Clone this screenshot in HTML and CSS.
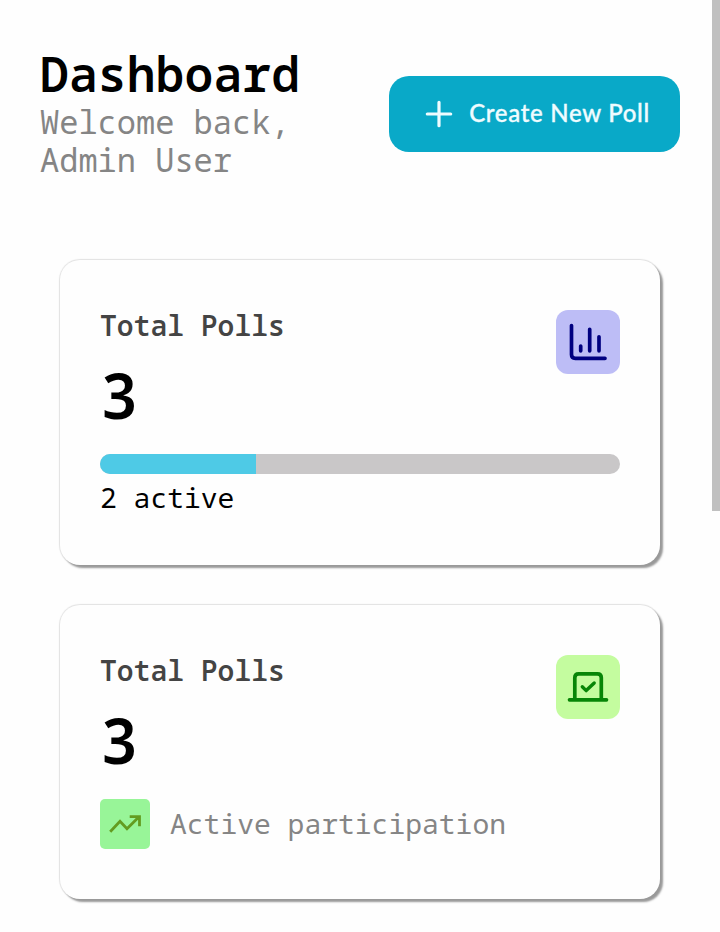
FILE: index.html
```html
<!DOCTYPE html>
<html lang="en">
<head>
<meta charset="utf-8">
<title>Dashboard</title>
<link rel="stylesheet" href="styles.css">
</head>
<body>
<header class="header">
  <div class="heading">
    <h1 class="title">Dashboard</h1>
    <p class="welcome">Welcome back,<br>Admin User</p>
  </div>
  <button class="create">
    <svg class="plus" viewBox="0 0 28 28"><path d="M14 2.3v23.4M2.3 14h23.4"/></svg>
    <span>Create New Poll</span>
  </button>
</header>
<main class="cards">
  <section class="card">
    <div class="top">
      <div>
        <h2 class="label">Total Polls</h2>
        <p class="value">3</p>
      </div>
      <svg class="icon blue" viewBox="0 0 64 64"><path d="M15.5 15.5V44.5Q15.5 48.3 19.3 48.3H49M24.7 36v4.8M33.7 19.3v21.5M43 26.8v14"/></svg>
    </div>
    <div class="track"><div class="fill"></div></div>
    <p class="active">2 active</p>
  </section>
  <section class="card">
    <div class="top">
      <div>
        <h2 class="label">Total Polls</h2>
        <p class="value">3</p>
      </div>
      <svg class="icon green" viewBox="0 0 64 64"><path d="M13.5 44.8h37M18.8 44.8V22.7Q18.8 18.9 22.6 18.9H41.5Q45.3 18.9 45.3 22.7V44.8"/><path class="check" d="M26.3 31.8L30.2 35.6L38.2 28"/></svg>
    </div>
    <div class="participation">
      <svg class="trend" viewBox="0 0 50 50"><path d="M10.2 32.8L20 22.2L27 29.8L39.3 17.6M29.7 17.6H39.5V27.2"/></svg>
      <span>Active participation</span>
    </div>
  </section>
</main>
<div class="scrollbar"></div>
</body>
</html>
```
FILE: styles.css
```css
* { box-sizing: border-box; }
body {
  margin: 0;
  height: 932px;
  overflow: hidden;
  background: #fefefe;
  color: #000;
  font-family: "Noto Sans Mono", "Droid Sans Mono", "DejaVu Sans Mono", monospace;
}
h1, h2, p { margin: 0; }
.header {
  height: 260px;
  padding: 44px 40px 0;
  display: flex;
  justify-content: space-between;
  align-items: flex-start;
}
.title { font-size: 48px; line-height: 59px; font-weight: 600; letter-spacing: 0.1px; }
.welcome { font-size: 32px; line-height: 38px; color: #858585; }
.create {
  width: 291px;
  height: 76px;
  margin-top: 32px;
  padding: 0 30px 2px 36px;
  display: flex;
  align-items: center;
  justify-content: space-between;
  border: 0;
  border-radius: 20px;
  background: #09a9c8;
  color: #effcff;
  font: 500 24px/30px Lato, sans-serif;
  letter-spacing: 0.7px;
  white-space: nowrap;
  -webkit-text-stroke: 0.35px #effcff;
}
svg { flex: none; fill: none; stroke-linecap: round; stroke-linejoin: round; }
.plus { width: 28px; height: 28px; margin-top: 1px; stroke: #effcff; stroke-width: 3.2; }
.cards {
  padding: 0 60px;
  display: flex;
  flex-direction: column;
  gap: 40px;
}
.card {
  height: 305px;
  padding: 50px 40px 0;
  border-radius: 20px;
  background: #fefefe;
  box-shadow: 3px 3px 2px #999, 0 0 1px 1px #e2e2e2;
}
.card + .card { height: 294px; }
.top {
  height: 144px;
  display: flex;
  justify-content: space-between;
}
.label { margin-top: -1px; font-size: 28px; line-height: 33px; font-weight: 600; color: #444; }
.value { margin-top: 15px; font-size: 64px; line-height: 76px; font-weight: 600; }
.icon { width: 64px; height: 64px; border-radius: 12px; stroke-width: 3.7; }
.blue { background: #bdbdf6; stroke: #000080; }
.green { background: #c4fc9f; stroke: #078507; }
.check { stroke-width: 3.4; }
.track { height: 20px; border-radius: 10px; overflow: hidden; background: #c9c7c8; }
.fill { width: 30%; height: 20px; background: #4ecae6; }
.active { margin-top: 7px; font-size: 28px; line-height: 33px; }
.participation {
  display: flex;
  align-items: center;
  gap: 20px;
  height: 50px;
  font-size: 28px;
  line-height: 48px;
  color: #858585;
}
.participation span { margin-bottom: 2px; }
.trend {
  width: 50px;
  height: 50px;
  border-radius: 5px;
  background: #98f598;
  stroke: #639c20;
  stroke-width: 2.8;
  stroke-linecap: butt;
  stroke-linejoin: miter;
}
.scrollbar {
  position: absolute;
  top: 0;
  right: 0;
  width: 8px;
  height: 511px;
  background: #c0c0c0;
}
```
